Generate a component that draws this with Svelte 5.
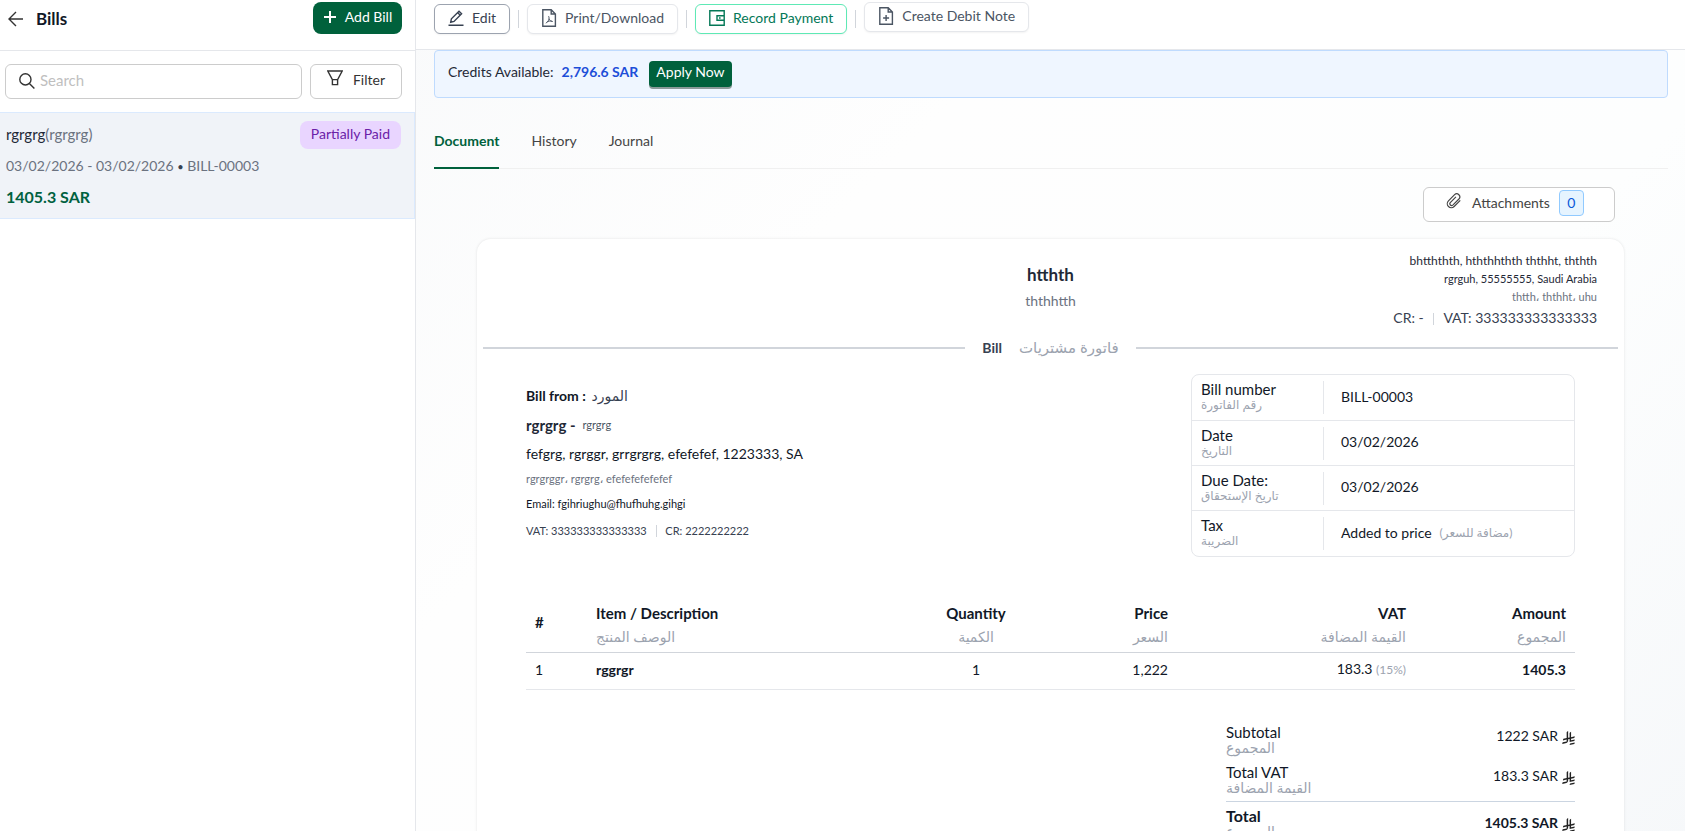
<script>
  const tabs = ['Document', 'History', 'Journal'];
  let active = $state('Document');

  const details = [
    { en: 'Bill number', ar: 'رقم الفاتورة', value: 'BILL-00003' },
    { en: 'Date', ar: 'التاريخ', value: '03/02/2026' },
    { en: 'Due Date:', ar: 'تاريخ الإستحقاق', value: '03/02/2026' },
    { en: 'Tax', ar: 'الضريبة', value: 'Added to price', note: '(مضافة للسعر)' }
  ];

  const columns = [
    { key: 'item', en: 'Item / Description', ar: 'الوصف المنتج' },
    { key: 'qty', en: 'Quantity', ar: 'الكمية' },
    { key: 'price', en: 'Price', ar: 'السعر' },
    { key: 'vat', en: 'VAT', ar: 'القيمة المضافة' },
    { key: 'amount', en: 'Amount', ar: 'المجموع' }
  ];

  const totals = [
    { en: 'Subtotal', ar: 'المجموع', value: '1222 SAR' },
    { en: 'Total VAT', ar: 'القيمة المضافة', value: '183.3 SAR' },
    { en: 'Total', ar: 'المجموع', value: '1405.3 SAR', grand: true }
  ];
</script>

{#snippet riyal()}
  <svg class="riyal" viewBox="0 0 1124 1257" aria-hidden="true">
    <path d="M699.62 1113.02c-20.06 44.48-33.32 92.75-38.4 143.37l424.51-90.24c20.06-44.47 33.31-92.75 38.4-143.37z" />
    <path d="M1085.73 895.8c20.06-44.47 33.32-92.75 38.4-143.37l-330.68 70.33v-135.2l292.27-62.11c20.06-44.47 33.32-92.75 38.4-143.37l-330.68 70.27V66.13c-50.67 28.45-95.67 66.32-132.25 110.99v403.35l-132.25 28.11V0c-50.67 28.44-95.67 66.32-132.25 110.99v525.69l-295.91 62.88c-20.06 44.47-33.33 92.75-38.42 143.37l334.33-71.05v170.26l-358.3 76.14c-20.06 44.47-33.32 92.75-38.4 143.37l375.04-79.7c30.53-6.35 56.77-24.4 73.83-49.24l68.78-101.97c7.14-10.55 11.3-23.27 11.3-36.97v-149.98l132.25-28.11v270.4z" />
  </svg>
{/snippet}

<div class="app">
  <aside>
    <header class="side-head">
      <button class="back" aria-label="Back">
        <svg width="16" height="16" viewBox="0 0 16 16"><path d="M15 8H1.2M8 1 1 8l7 7" /></svg>
      </button>
      <h1>Bills</h1>
      <button class="add">
        <svg width="14" height="14" viewBox="0 0 14 14"><path d="M7 1v12M1 7h12" /></svg>
        Add Bill
      </button>
    </header>

    <div class="search-row">
      <label class="search">
        <svg width="16" height="16" viewBox="0 0 16 16"><circle cx="6.4" cy="6.4" r="5.6" /><path d="m10.4 10.4 5 5" /></svg>
        <input type="text" placeholder="Search" aria-label="Search" />
      </label>
      <button class="filter">
        <svg width="16" height="16" viewBox="0 0 16 16"><path d="M.8 1h14.4l-4.6 8.6v5H5.4v-5zM5.4 9.6h5.2" /></svg>
        Filter
      </button>
    </div>

    <a class="bill" href="#bill-00003">
      <div class="bill-top">
        <span class="name">rgrgrg<span class="alt">(rgrgrg)</span></span>
        <span class="badge">Partially Paid</span>
      </div>
      <div class="dates">03/02/2026 - 03/02/2026 <b>•</b> BILL-00003</div>
      <div class="sum">1405.3 SAR</div>
    </a>
  </aside>

  <main>
    <header class="toolbar">
      <button class="tool edit">
        <svg width="16" height="16" viewBox="0 0 16 16"><path d="M.5 15.3h15M2.7 12.2l.7-3.4L11 1.2l2.6 2.6L6 11.4zM9.6 2.6l2.6 2.6" /></svg>
        Edit
      </button>
      <span class="bar"></span>
      <button class="tool">
        <svg width="16" height="18" viewBox="0 0 16 18"><path d="M1.8.8h8.4l4.2 4.2v12.2H1.8zM10.2.8V5h4.2" /><path class="thin" d="M7.6 7.2c1.2 2.8.2 4.6-2.8 7M7.9 9.8c.8 1.8 2 2.6 3.9 2.7M5.8 13.2c1.6-1.2 3.2-1.5 5.2-1" /></svg>
        Print/Download
      </button>
      <span class="bar"></span>
      <button class="tool record">
        <svg width="16" height="16" viewBox="0 0 16 16"><path d="M.8.8h14.4v14.4H.8zM15.2 5.8H8v4.4h7.2M10 8h1.6" /></svg>
        Record Payment
      </button>
      <span class="bar"></span>
      <button class="tool debit">
        <svg width="16" height="18" viewBox="0 0 16 18"><path d="M1.8.8h8.4l4.2 4.2v12.2H1.8zM10.2.8V5h4.2M8.1 8v6M5.1 11h6" /></svg>
        Create Debit Note
      </button>
    </header>

    <div class="content">
      <div class="credits">
        <span>Credits Available:</span>
        <strong>2,796.6 SAR</strong>
        <button class="apply">Apply Now</button>
      </div>

      <nav class="tabs">
        {#each tabs as tab}
          <button class:active={tab === active} onclick={() => (active = tab)}>{tab}</button>
        {/each}
      </nav>

      <div class="sheet-wrap">
        <button class="attach">
          <svg width="16" height="16" viewBox="0 0 24 24"><path d="m21.4 11-9.2 9.2a6 6 0 0 1-8.5-8.5l9.2-9.2a4.6 4.6 0 0 1 6.5 6.5l-9.2 9.2a2.7 2.7 0 0 1-3.8-3.8l8.5-8.5" /></svg>
          Attachments
          <span class="count">0</span>
        </button>

        <article class="sheet">
          <div class="company">
            <div class="title">
              <h2>htthth</h2>
              <p>ththhtth</p>
            </div>
            <div class="address">
              <p class="l1">bhtththth, hththhthth ththht, ththth</p>
              <p class="l2">rgrguh, 55555555, Saudi Arabia</p>
              <p class="l3">thtth، ththht، uhu</p>
              <p class="l4">CR: - <i></i> VAT: 333333333333333</p>
            </div>
          </div>

          <div class="rule"><b>Bill</b><span lang="ar">فاتورة مشتريات</span></div>

          <div class="body">
            <div class="parties">
              <div class="from">
                <p class="f1"><b>Bill from :</b> <span lang="ar">المورد</span></p>
                <p class="f2"><b>rgrgrg -</b> <small>rgrgrg</small></p>
                <p class="f3">fefgrg, rgrggr, grrgrgrg, efefefef, 1223333, SA</p>
                <p class="f4">rgrgrggr، rgrgrg، efefefefefefef</p>
                <p class="f5">Email: fgihriughu@fhufhuhg.gihgi</p>
                <p class="f6">VAT: 333333333333333 <i></i> CR: 2222222222</p>
              </div>

              <dl class="details">
                {#each details as row}
                  <div>
                    <dt>{row.en}<span lang="ar">{row.ar}</span></dt>
                    <dd>{row.value}{#if row.note}<small lang="ar" dir="rtl">{row.note}</small>{/if}</dd>
                  </div>
                {/each}
              </dl>
            </div>

            <table>
              <thead>
                <tr>
                  <th class="num">#</th>
                  {#each columns as col}
                    <th class={col.key}>{col.en}<span lang="ar">{col.ar}</span></th>
                  {/each}
                </tr>
              </thead>
              <tbody>
                <tr>
                  <td class="num">1</td>
                  <td class="item"><b>rggrgr</b></td>
                  <td class="qty">1</td>
                  <td class="price">1,222</td>
                  <td class="vat">183.3 <small>(15%)</small></td>
                  <td class="amount"><b>1405.3</b></td>
                </tr>
              </tbody>
            </table>

            <dl class="totals">
              {#each totals as t}
                <div class:grand={t.grand}>
                  <dt>{t.en}<span lang="ar">{t.ar}</span></dt>
                  <dd>{t.value}{@render riyal()}</dd>
                </div>
              {/each}
            </dl>
          </div>
        </article>
      </div>
    </div>
  </main>
</div>

<style>
  :global(body) {
    margin: 0;
    background: #fff;
  }
  .app {
    display: grid;
    grid-template-columns: 416px 1fr;
    height: 100vh;
    overflow: hidden;
    font: 14px/20px Lato, 'DejaVu Sans', sans-serif;
    color: #111827;
  }
  .app * {
    box-sizing: border-box;
  }
  h1, h2, p, dl, dd {
    margin: 0;
  }
  p, button, dt, dd, th, td {
    white-space: nowrap;
  }
  button {
    display: flex;
    align-items: center;
    justify-content: center;
    font: inherit;
    color: #4b5563;
    background: #fff;
    border: 1px solid #ccc;
    border-radius: 6px;
    padding: 0;
    cursor: pointer;
  }
  svg {
    flex: none;
    fill: none;
    stroke: currentColor;
    stroke-width: 1.4;
  }
  .thin {
    stroke-width: 1;
  }
  b, strong {
    font-weight: 700;
  }
  small {
    font-size: 11px;
  }

  /* Sidebar */
  aside {
    border-right: 1px solid #e5e7eb;
    background: #fff;
  }
  .side-head {
    display: flex;
    align-items: flex-start;
    height: 51px;
    padding: 2px 13px 0 8px;
    border-bottom: 1px solid #e5e7eb;
  }
  .back {
    height: 34px;
    border: 0;
    color: #333;
  }
  h1 {
    flex: 1;
    margin-left: 12px;
    font-size: 17px;
    line-height: 33px;
    font-weight: 700;
  }
  .add {
    width: 89px;
    height: 32px;
    gap: 8px;
    padding-bottom: 2px;
    color: #fff;
    background: #00613c;
    border: 0;
    border-radius: 8px;
  }
  .add svg {
    stroke-width: 2;
  }
  .search-row {
    display: flex;
    gap: 8px;
    padding: 13px 13px 13px 5px;
  }
  .search {
    flex: 1;
    display: flex;
    align-items: center;
    gap: 5px;
    height: 35px;
    padding: 0 13px 2px;
    border: 1px solid #ccc;
    border-radius: 6px;
    color: #333;
  }
  .search input {
    flex: 1;
    min-width: 0;
    border: 0;
    padding: 0 0 2px;
    outline: 0;
    background: none;
    font: inherit;
    font-size: 15px;
  }
  .search input::placeholder {
    color: #bfbfbf;
  }
  .filter {
    width: 92px;
    gap: 10px;
    padding-bottom: 3px;
    color: #333;
  }
  .filter svg {
    margin-bottom: 4px;
  }
  .bill {
    display: block;
    height: 107px;
    padding: 8px 13px 0 6px;
    border: 1px solid #dbeafe;
    border-left: 0;
    background: #f0f3f8;
    color: #1f2937;
    text-decoration: none;
  }
  .bill-top {
    display: flex;
    align-items: center;
    justify-content: space-between;
  }
  .alt, .dates {
    color: #6b7280;
  }
  .name {
    padding-bottom: 2px;
    font-size: 15px;
  }
  .badge {
    padding: 3px 11px 5px;
    border-radius: 8px;
    background: #e9d5ff;
    color: #6b21a8;
  }
  .dates {
    margin-top: 7px;
  }
  .dates b {
    font-size: 11px;
    font-weight: 400;
    color: #374151;
  }
  .sum {
    margin-top: 10px;
    font-size: 16px;
    font-weight: 700;
    color: #00613f;
  }

  /* Main column */
  main {
    min-width: 0;
    background: linear-gradient(135deg, #f9fafb 0, #fefefe 30%, #fdfefe 65%, #f6f8fa 100%);
  }
  .toolbar {
    display: flex;
    align-items: flex-start;
    gap: 8px;
    height: 50px;
    padding: 4px 18px 0;
    border-bottom: 1px solid #e5e7eb;
    background: #fff;
  }
  .tool {
    height: 30px;
    gap: 8px;
    padding: 0 13px 2px;
    border-color: #e5e7eb;
    box-shadow: 0 1px 2px #0000000d;
  }
  .edit {
    color: #374151;
    border-color: #9ca3af;
  }
  .record {
    color: #047857;
    border-color: #5ee9b5;
  }
  .debit {
    margin-top: -2px;
  }
  .bar {
    width: 1px;
    height: 18px;
    margin-top: 6px;
    background: #d1d5db;
  }
  .content {
    padding: 0 17px 0 18px;
  }
  .credits {
    display: flex;
    align-items: center;
    height: 48px;
    padding: 0 13px 4px;
    border: 1px solid #bfdbfe;
    border-radius: 4px;
    background: #eff6ff;
    color: #1f2937;
  }
  .credits strong {
    margin: 0 11px 0 8px;
    color: #1d4ed8;
  }
  .apply {
    height: 26px;
    margin-top: 4px;
    padding: 0 7px 4px;
    border: 0;
    border-radius: 4px;
    color: #fff;
    background: #00613c;
    box-shadow: 0 2px 0 #8a9a98;
  }
  .tabs {
    display: flex;
    gap: 32px;
    height: 71px;
    border-bottom: 1px solid #f0f0f0;
  }
  .tabs button {
    align-items: flex-end;
    height: 71px;
    padding-bottom: 16px;
    border: 0;
    border-bottom: 2px solid transparent;
    border-radius: 0;
    background: none;
    color: #444;
  }
  .tabs .active {
    font-weight: 700;
    color: #00613c;
    border-color: #00613c;
  }
  .sheet-wrap {
    padding: 18px 44px 0 43px;
  }
  .attach {
    width: 192px;
    height: 35px;
    margin: 0 9px 17px auto;
    padding: 0 8px 3px 0;
    gap: 9px;
    color: #444;
  }
  .attach svg {
    stroke-width: 1.8;
    margin: 0 1px 4px 0;
  }
  .count {
    width: 25px;
    padding: 2px 0;
    border: 1px solid #91caff;
    border-radius: 4px;
    background: #e6f4ff;
    color: #0958d9;
  }
  .sheet {
    padding-top: 13px;
    border-radius: 14px;
    background: #fff;
    box-shadow: 0 0 3px #0000001c;
  }
  .company {
    display: grid;
    grid-template-columns: 1fr 1fr 1fr;
    height: 84px;
    padding: 0 27px;
  }
  .title {
    grid-column: 2;
    padding-top: 12px;
    text-align: center;
    color: #6b7280;
  }
  h2 {
    margin-bottom: 5px;
    font-size: 17px;
    line-height: 22px;
    color: #1f2937;
  }
  .address {
    justify-self: end;
    text-align: right;
    color: #1f2937;
  }
  .address p {
    line-height: 18px;
  }
  .l1 {
    font-size: 12px;
  }
  .l2, .l3, .f4, .f5, .f6 {
    font-size: 11px;
  }
  .l3, .f4 {
    color: #6b7280;
  }
  .address .l4 {
    line-height: 24px;
    color: #374151;
  }
  p i {
    display: inline-block;
    width: 1px;
    height: 12px;
    margin: 0 6px;
    vertical-align: -2px;
    background: #d1d5db;
  }
  .rule {
    display: flex;
    align-items: center;
    padding: 0 6px;
    line-height: 22px;
    color: #374151;
  }
  .rule::before,
  .rule::after {
    content: '';
    flex: 1;
    height: 2px;
    background: #d1d5db;
  }
  .rule b {
    margin: 0 17px;
  }
  .rule span {
    margin-right: 17px;
    padding-bottom: 2px;
    font-size: 15px;
    color: #9ca3af;
  }
  .body {
    padding: 14px 49px;
  }
  .parties {
    display: flex;
    justify-content: space-between;
    align-items: flex-start;
  }
  .from {
    padding-top: 12px;
  }
  .f1 span {
    margin-left: 2px;
    color: #374151;
  }
  .f2 {
    margin-top: 9px;
    font-size: 15px;
    color: #1f2937;
  }
  .f2 small {
    margin-left: 3px;
    color: #4b5563;
    vertical-align: 2px;
  }
  .f3 {
    margin-top: 9px;
  }
  .f4, .f5 {
    margin-top: 5px;
  }
  .f6 {
    margin-top: 7px;
    color: #374151;
  }
  .details {
    width: 384px;
    border: 1px solid #e5e7eb;
    border-radius: 8px;
  }
  .details div {
    display: flex;
    align-items: center;
    height: 45px;
  }
  .details div:last-child {
    height: 46px;
  }
  .details div + div {
    border-top: 1px solid #e5e7eb;
  }
  dt {
    font-size: 15px;
  }
  dt span {
    display: block;
    font-size: 12px;
    line-height: 15px;
    color: #9ca3af;
  }
  .details dt {
    width: 132px;
    padding: 0 0 2px 9px;
    line-height: 16px;
    border-right: 1px solid #e5e7eb;
  }
  .details dd {
    display: flex;
    padding: 0 0 2px 17px;
  }
  .details small {
    margin-left: 8px;
    font-size: 12px;
    color: #9ca3af;
  }
  table {
    width: 100%;
    margin-top: 41px;
    table-layout: fixed;
    border-collapse: collapse;
    text-align: right;
  }
  th {
    padding: 0 9px 7px;
    font-size: 15px;
    line-height: 30px;
    font-weight: 700;
    border-bottom: 1px solid #d1d5db;
  }
  th span {
    display: block;
    font-size: 14px;
    line-height: 17px;
    font-weight: 400;
    color: #9ca3af;
  }
  td {
    padding: 6px 9px 9px;
    border-bottom: 1px solid #e5e7eb;
  }
  .num {
    width: 61px;
    text-align: left;
  }
  .item {
    text-align: left;
  }
  .qty {
    width: 142px;
    text-align: center;
  }
  .price {
    width: 130px;
  }
  .vat {
    width: 238px;
  }
  .amount {
    width: 160px;
  }
  td small {
    font-size: 12px;
    color: #9ca3af;
  }
  .totals {
    width: 349px;
    margin: 31px 0 0 auto;
  }
  .totals div {
    display: flex;
    justify-content: space-between;
    align-items: center;
    height: 40px;
  }
  .totals dt {
    padding-bottom: 3px;
    line-height: 16px;
  }
  .totals dt span {
    font-size: 14px;
  }
  .totals dd {
    display: flex;
    align-items: center;
    gap: 4px;
    padding-bottom: 10px;
  }
  .totals .grand {
    height: 46px;
    border-top: 1px solid #cbd5e1;
    font-weight: 700;
  }
  .totals .grand dd {
    padding-bottom: 4px;
  }
  .grand dt {
    font-size: 16px;
  }
  .grand dt span {
    font-weight: 400;
  }
  .riyal {
    width: 13px;
    height: 14px;
    margin-top: 4px;
    fill: #222;
    stroke: none;
  }
</style>
